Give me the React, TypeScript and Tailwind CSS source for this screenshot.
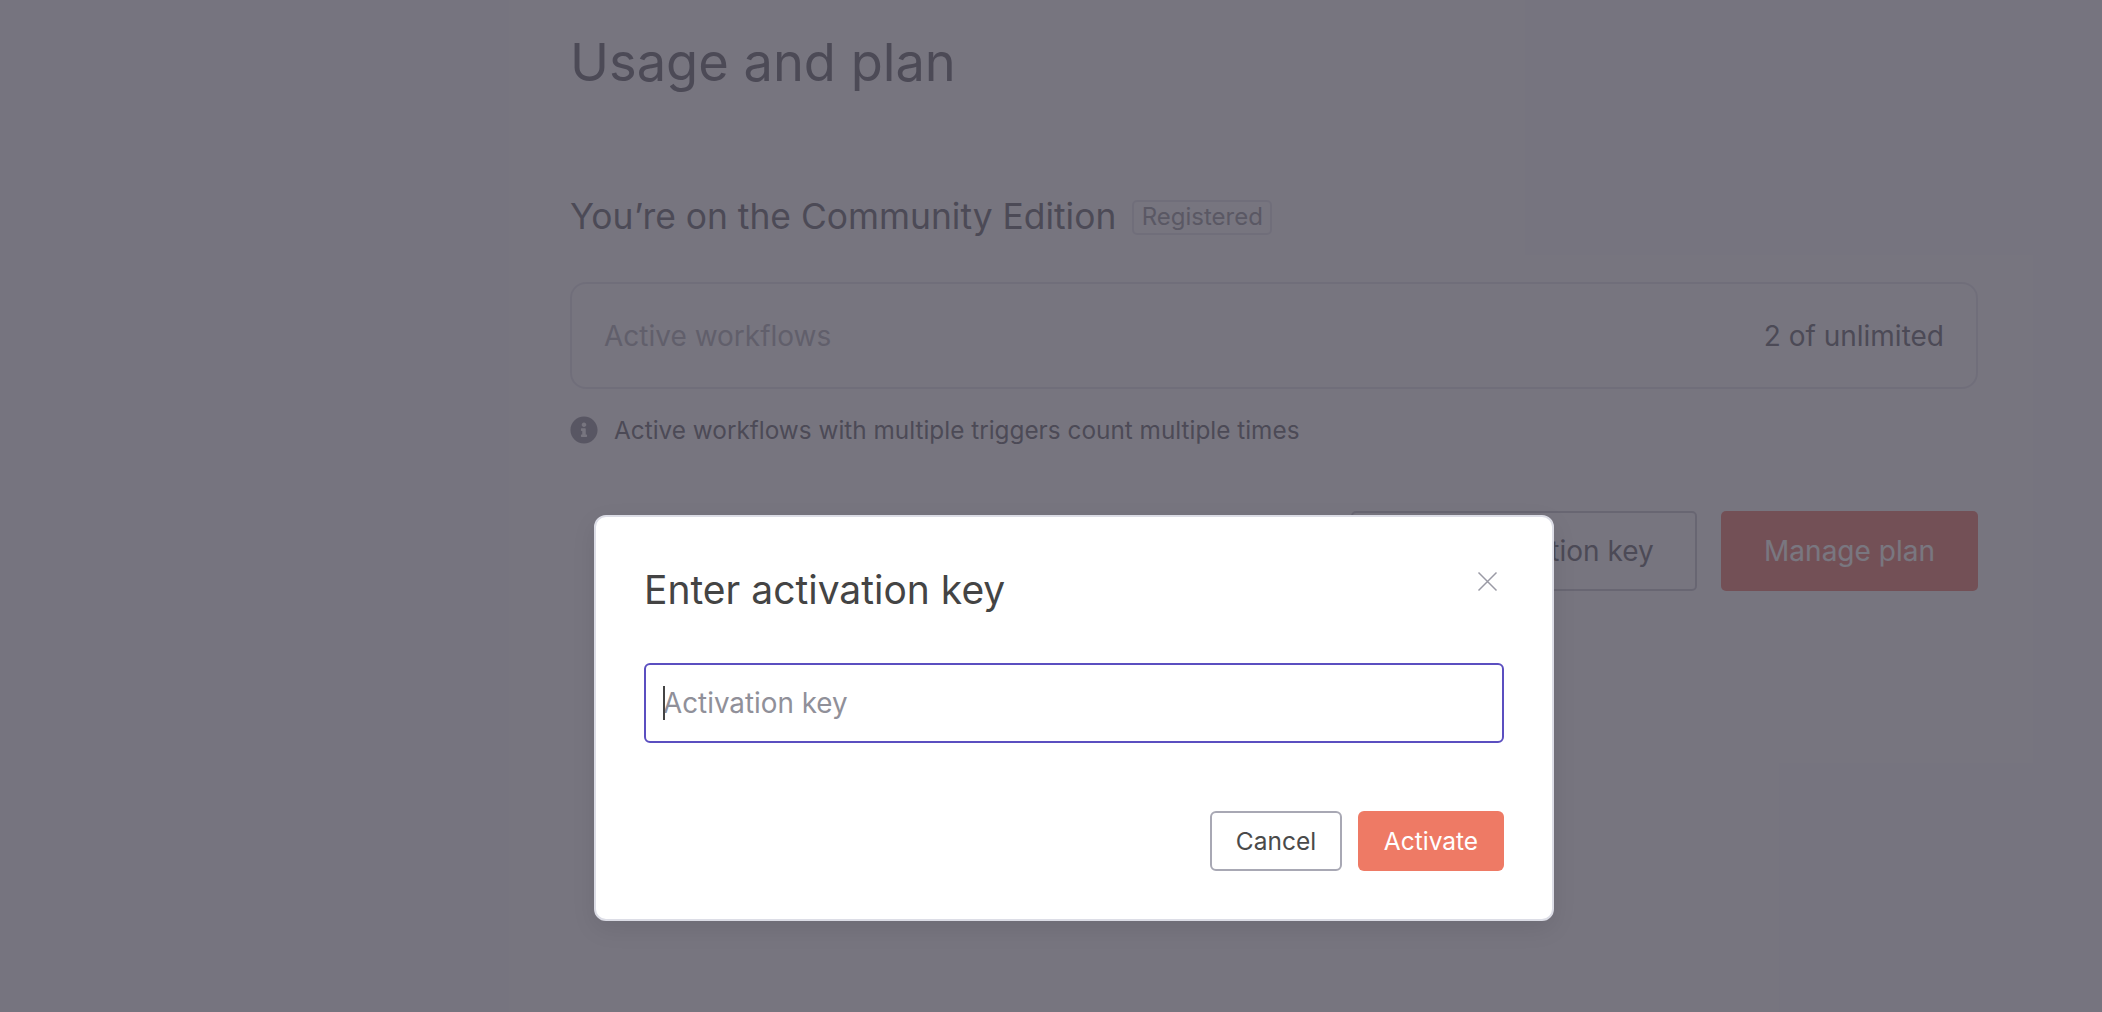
export default function App() {
  return (
    <div className="relative h-[1012px] w-full overflow-hidden bg-[#f5f5fa] font-['Inter',sans-serif] text-[#4c4c58]">
      {/* page behind the dialog */}
      <main className="ml-[570px] w-[1408px] pt-[25px]">
        <h1 className="text-[52.4px] leading-[74px] font-normal">Usage and plan</h1>

        <div className="mt-[100px] flex h-[36px] items-center">
          <h2 className="text-[35.4px] leading-[36px] font-normal">You’re on the Community Edition</h2>
          <span className="ml-[16px] flex h-[35px] w-[140px] items-center justify-center rounded-[5px] border-2 border-[#dcdce8] text-[24px] text-[#85858f]">
            Registered
          </span>
        </div>

        <div className="mt-[47px] flex h-[107px] items-center justify-between rounded-[16px] border-2 border-[#dcdce8] bg-[#f6f6fb] px-[32px]">
          <span className="text-[28px] text-[#a0a0ac]">Active workflows</span>
          <span className="text-[28px]">2 of unlimited</span>
        </div>

        <div className="mt-[26px] flex h-[30px] items-center gap-[16px]">
          <svg width="28" height="28" viewBox="0 0 512 512" className="shrink-0 fill-[#7d7d8a]">
            <path d="M256 8C119 8 8 119 8 256s111 248 248 248 248-111 248-248S393 8 256 8zm0 110c23 0 42 19 42 42s-19 42-42 42-42-19-42-42 19-42 42-42zm56 254c0 7-5 12-12 12h-88c-7 0-12-5-12-12v-24c0-7 5-12 12-12h12v-64h-12c-7 0-12-5-12-12v-24c0-7 5-12 12-12h64c7 0 12 5 12 12v100h12c7 0 12 5 12 12v24z" />
          </svg>
          <p className="text-[24.35px] font-normal">Active workflows with multiple triggers count multiple times</p>
        </div>

        <div className="mt-[66px] flex justify-end gap-[24px]">
          <button className="h-[80px] w-[346px] rounded-[5px] border-2 border-[#bcbcc8] text-[28px] font-normal">
            Enter activation key
          </button>
          <button className="h-[80px] w-[257px] rounded-[5px] bg-[#e8665a] text-[28px] font-normal text-white">
            Manage plan
          </button>
        </div>
      </main>

      {/* overlay + dialog */}
      <div className="absolute inset-0 bg-[#4c4956]/75 pt-[515px] pl-[594px]">
        <div className="relative h-[406px] w-[960px] rounded-[12px] border-2 border-[#dcdde6] bg-white px-[48px] pt-[50px] shadow-[0_8px_24px_rgba(0,0,0,0.08)]">
          <h3 className="text-[39px] leading-[46px] font-normal text-[#444444]">Enter activation key</h3>
          <button className="absolute top-[54px] right-[54px] text-[#9a9aa5]">
            <svg width="21" height="21" viewBox="0 0 21 21" fill="none" stroke="currentColor" strokeWidth="1.5">
              <path d="M1.5 1.5 19.5 19.5M19.5 1.5 1.5 19.5" />
            </svg>
          </button>

          <div className="relative mt-[50px]">
            <input
              placeholder="Activation key"
              className="h-[80px] w-full rounded-[6px] border-2 border-[#5b4fc0] bg-white px-[17px] text-[27.8px] text-[#444444] caret-transparent outline-none placeholder:text-[#909099]"
            />
            <span className="absolute top-[23px] left-[19px] h-[34px] w-[2px] bg-[#444444]" />
          </div>

          <div className="mt-[68px] flex justify-end gap-[16px]">
            <button className="h-[60px] w-[132px] rounded-[6px] border-2 border-[#a8a8b4] bg-white text-[24.5px] font-normal text-[#4a4a4a]">
              Cancel
            </button>
            <button className="h-[60px] w-[146px] rounded-[6px] bg-[#ee7a65] text-[24.5px] font-normal text-white">
              Activate
            </button>
          </div>
        </div>
      </div>
    </div>
  );
}
